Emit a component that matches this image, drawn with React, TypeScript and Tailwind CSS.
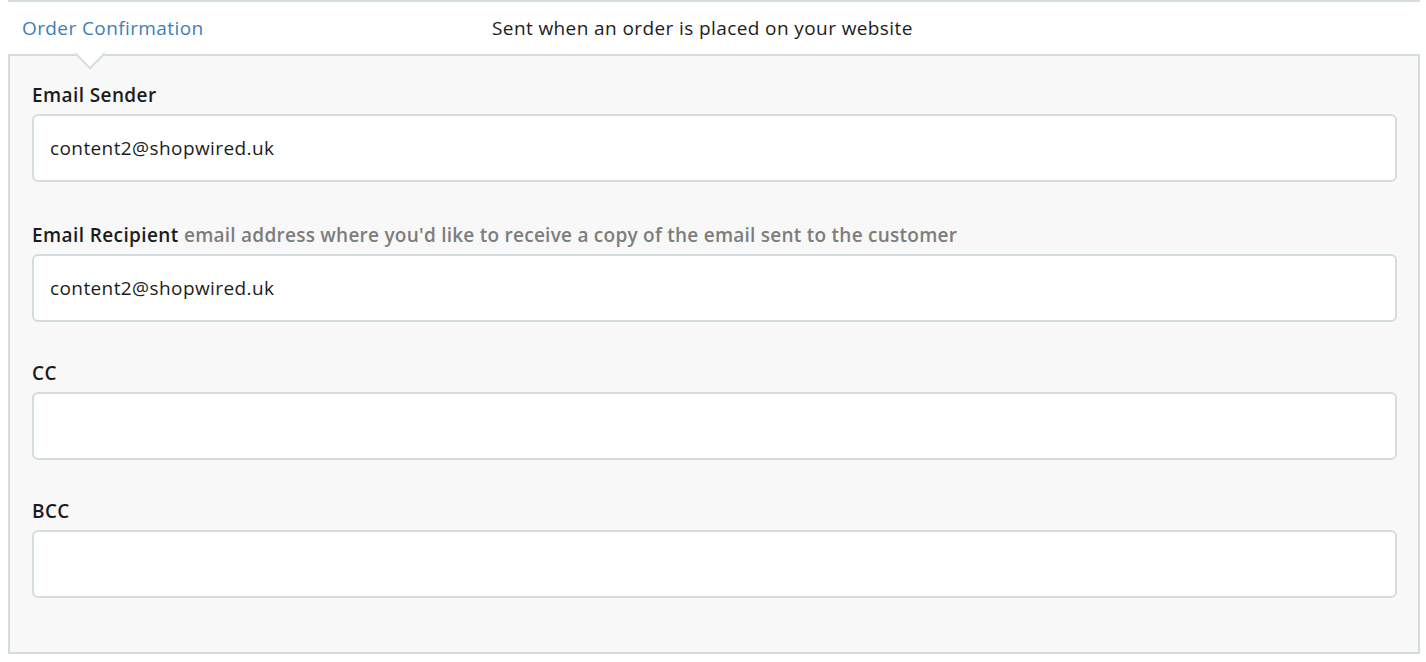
const fields = [
  { label: "Email Sender", hint: "", value: "content2@shopwired.uk" },
  {
    label: "Email Recipient",
    hint: "email address where you'd like to receive a copy of the email sent to the customer",
    value: "content2@shopwired.uk",
  },
  { label: "CC", hint: "", value: "" },
  { label: "BCC", hint: "", value: "" },
];

export default function App() {
  return (
    <div
      className="min-h-screen bg-white pl-[8px] pr-[6px] tracking-[0.4px] text-[#1c1c1c]"
      style={{ fontFamily: "'Open Sans', 'Noto Sans', sans-serif" }}
    >
      {/* tab header */}
      <div className="flex h-[54px] items-center border-t-2 border-[#d3dde0] text-[19px]">
        <div className="w-[484px] pl-[14px] text-[#3d80b8]">Order Confirmation</div>
        <div>Sent when an order is placed on your website</div>
      </div>

      {/* panel */}
      <div className="relative border-2 border-[#d3dde0] bg-[#f8f8f8] pb-[54px] pl-[22px] pr-[21px] pt-[28px]">
        <div className="absolute left-[69px] top-[-13px] h-[22px] w-[22px] rotate-45 border-b-2 border-r-2 border-[#d3dde0] bg-white" />

        {fields.map((f, i) => (
          <div key={f.label} className={i === 0 ? "mb-[42px]" : i < 3 ? "mb-[40px]" : ""}>
            <div className="mb-[8px] text-[19px] leading-[22px]">
              <span className="font-semibold">{f.label}</span>
              {f.hint && (
                <span className="font-semibold tracking-[0.25px] text-[#7d7d7d]"> {f.hint}</span>
              )}
            </div>
            <input
              type="text"
              defaultValue={f.value}
              className="h-[68px] w-full rounded-md border-2 border-[#d3dde0] bg-white pl-[16px] text-[19px] tracking-[0.4px] text-[#1c1c1c] outline-none"
            />
          </div>
        ))}
      </div>
    </div>
  );
}
